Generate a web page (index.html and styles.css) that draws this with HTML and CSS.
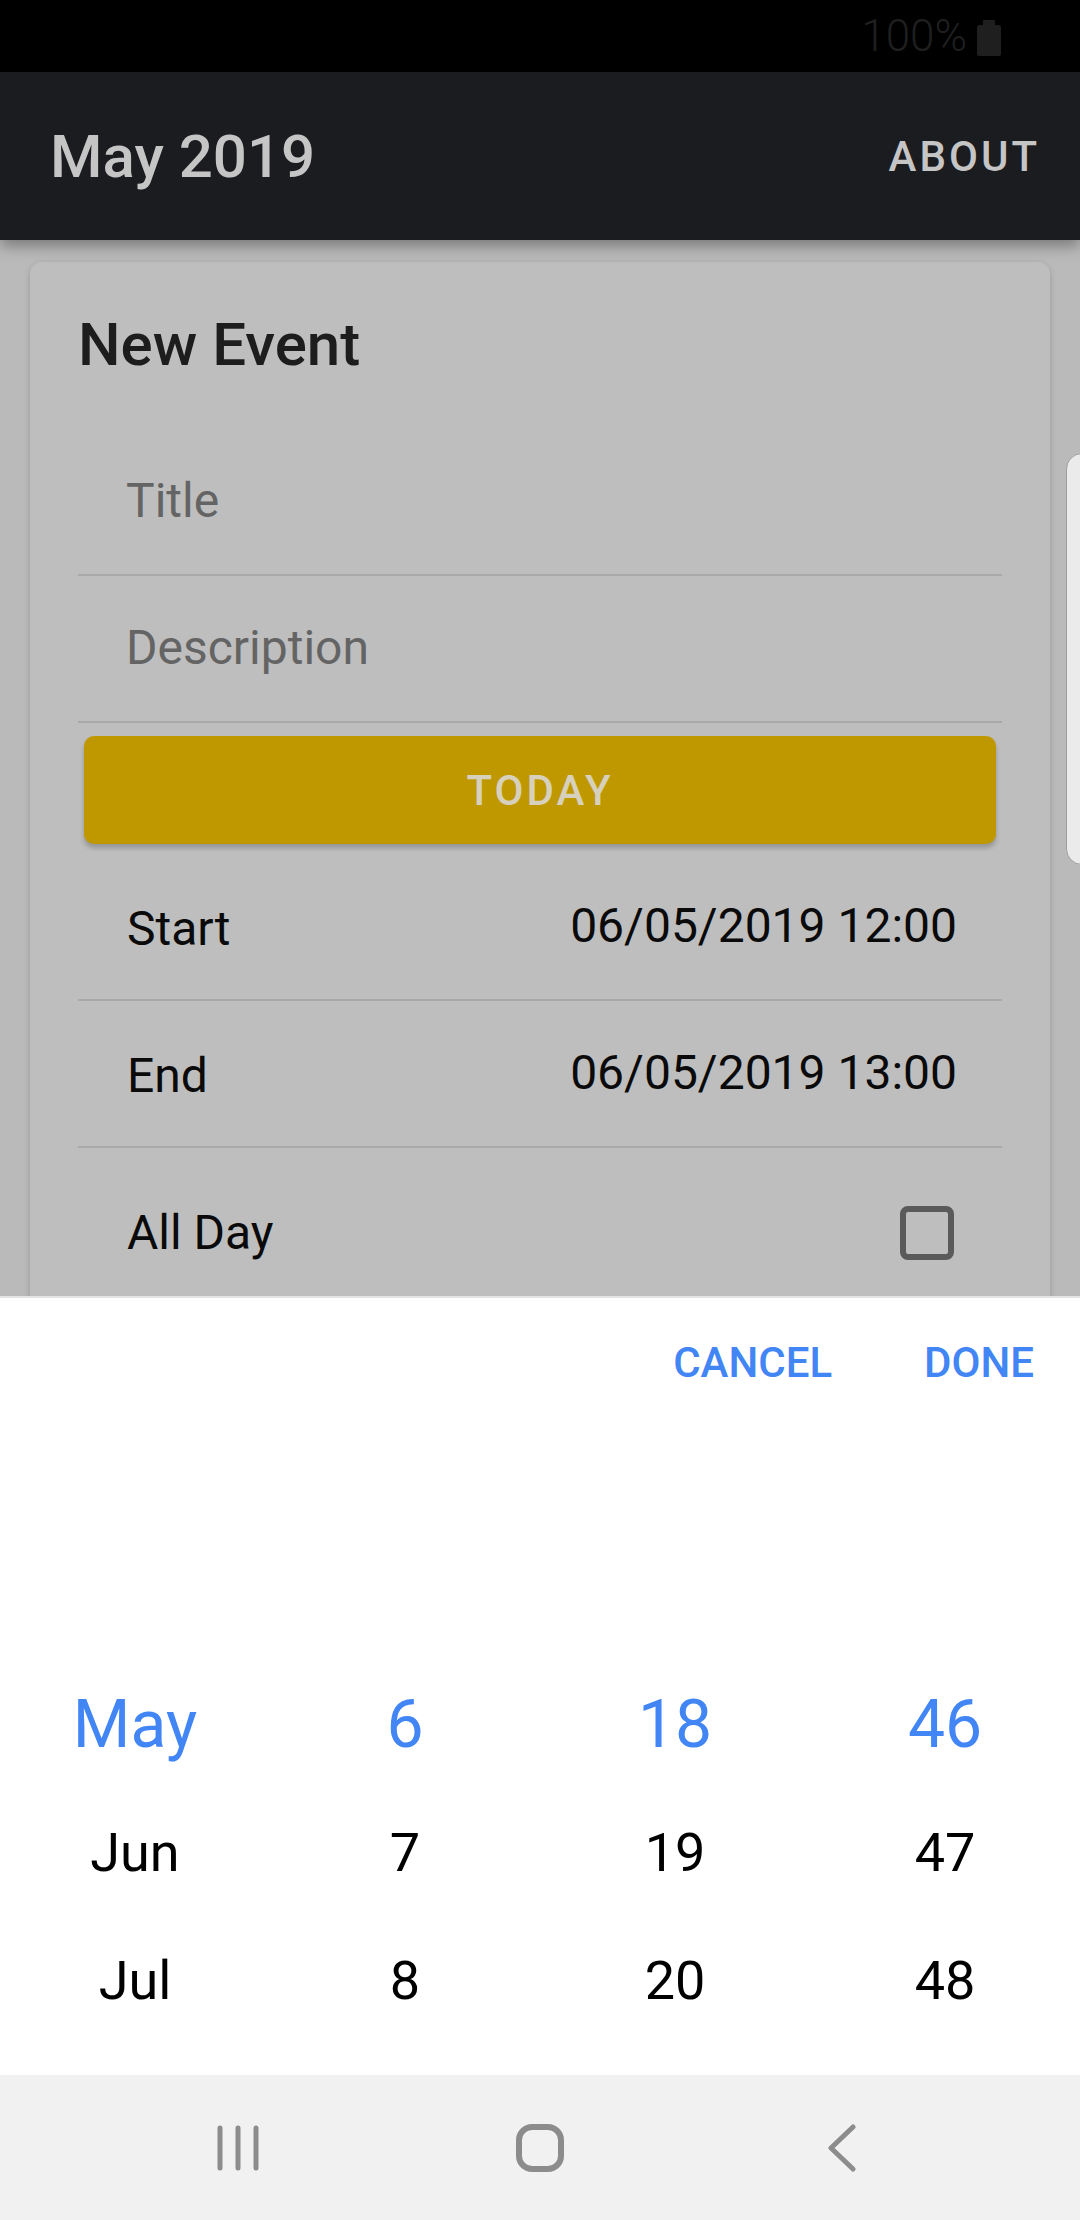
FILE: index.html
```html
<!DOCTYPE html>
<html lang="en">
<head>
<meta charset="utf-8">
<title>May 2019</title>
<link rel="stylesheet" href="styles.css">
</head>
<body>
<div class="screen">
  <div class="status">
    <span class="battery-text">100%</span>
    <svg class="battery" width="24" height="36" viewBox="0 0 24 36"><rect x="6" y="0" width="12" height="6" rx="1" fill="#1f1f1f"/><rect x="0" y="5" width="24" height="31" rx="2.5" fill="#1f1f1f"/></svg>
  </div>
  <header class="appbar">
    <div class="appbar-title">May 2019</div>
    <div class="appbar-action">ABOUT</div>
  </header>
  <main class="content">
    <section class="card">
      <h1 class="card-title">New Event</h1>
      <div class="field">Title</div>
      <div class="field">Description</div>
      <div class="today-btn">TODAY</div>
      <div class="row first">
        <span>Start</span>
        <span class="date">06/05/2019 12:00</span>
      </div>
      <div class="row">
        <span>End</span>
        <span class="date">06/05/2019 13:00</span>
      </div>
      <div class="row last">
        <span>All Day</span>
        <span class="checkbox"></span>
      </div>
    </section>
    <div class="edge-handle"></div>
  </main>
  <section class="sheet">
    <div class="sheet-actions">
      <span>CANCEL</span>
      <span>DONE</span>
    </div>
    <div class="picker">
      <div class="cell selected">May</div>
      <div class="cell selected">6</div>
      <div class="cell selected">18</div>
      <div class="cell selected">46</div>
      <div class="cell">Jun</div>
      <div class="cell">7</div>
      <div class="cell">19</div>
      <div class="cell">47</div>
      <div class="cell">Jul</div>
      <div class="cell">8</div>
      <div class="cell">20</div>
      <div class="cell">48</div>
    </div>
  </section>
  <nav class="navbar">
    <svg width="44" height="48" viewBox="0 0 44 48"><g stroke="#8c8c8c" stroke-width="5" stroke-linecap="round"><line x1="4" y1="4" x2="4" y2="44"/><line x1="22" y1="4" x2="22" y2="44"/><line x1="40" y1="4" x2="40" y2="44"/></g></svg>
    <svg width="50" height="50" viewBox="0 0 50 50"><rect x="4" y="4" width="42" height="42" rx="13" fill="none" stroke="#8c8c8c" stroke-width="6"/></svg>
    <svg width="30" height="48" viewBox="0 0 30 48"><polyline points="26,3 4,24 26,45" fill="none" stroke="#8c8c8c" stroke-width="5" stroke-linecap="round" stroke-linejoin="round"/></svg>
  </nav>
</div>
</body>
</html>
```

FILE: styles.css
```css
html, body {
  margin: 0;
  padding: 0;
  background: #000;
}

.screen {
  width: 1080px;
  height: 2220px;
  display: flex;
  flex-direction: column;
  overflow: hidden;
  font-family: Roboto, "Noto Sans", sans-serif;
}

.status {
  height: 72px;
  flex: none;
  background: #000;
  display: flex;
  align-items: center;
  justify-content: flex-end;
  padding-right: 79px;
  gap: 10px;
}

.battery-text {
  font-size: 44px;
  font-weight: 300;
  color: #1f1f1f;
  line-height: 72px;
}

.battery {
  margin-top: 4px;
}

.appbar {
  height: 168px;
  flex: none;
  background: #1b1c20;
  display: flex;
  align-items: center;
  justify-content: space-between;
  padding: 0 40px 0 50px;
  box-shadow: 0 6px 14px rgba(0, 0, 0, 0.35);
  position: relative;
  z-index: 2;
}

.appbar-title {
  font-size: 60px;
  font-weight: 500;
  color: #c5c5c5;
}

.appbar-action {
  font-size: 42px;
  font-weight: 500;
  color: #c5c5c5;
  letter-spacing: 3px;
}

.content {
  flex: 1;
  background: #bababa;
  overflow: hidden;
  position: relative;
  padding-top: 22px;
}

.card {
  margin: 0 30px;
  padding: 48px 48px 0;
  background: #bebebe;
  border-radius: 12px;
  box-shadow: 0 2px 6px rgba(0, 0, 0, 0.18);
}

.card-title {
  margin: 0;
  font-size: 60px;
  line-height: 70px;
  font-weight: 500;
  color: #1d1d1d;
}

.field {
  box-sizing: border-box;
  height: 147px;
  padding: 44px 0 0 48px;
  border-bottom: 2px solid #a9a9a9;
  font-size: 48px;
  line-height: 56px;
  color: #646464;
}

.card-title + .field {
  margin-top: 49px;
}

.today-btn {
  margin: 13px 6px 0;
  height: 108px;
  border-radius: 10px;
  background: #bf9800;
  color: #d6d0bc;
  font-size: 42px;
  font-weight: 500;
  letter-spacing: 3px;
  display: flex;
  align-items: center;
  justify-content: center;
  box-shadow: 0 4px 5px rgba(0, 0, 0, 0.22);
}

.row {
  box-sizing: border-box;
  height: 147px;
  padding: 4px 48px 0 49px;
  border-bottom: 2px solid #a9a9a9;
  display: flex;
  align-items: center;
  justify-content: space-between;
  font-size: 48px;
  line-height: 56px;
  color: #0a0a0a;
}

.row.first {
  margin-top: 10px;
}

.row .date {
  margin: 0 -3px 6px 0;
}

.row.last {
  height: 162px;
  padding-top: 8px;
  border-bottom: none;
}

.checkbox {
  box-sizing: border-box;
  width: 54px;
  height: 54px;
  border: 6px solid #5a5a5a;
  border-radius: 8px;
}

.edge-handle {
  position: absolute;
  top: 213px;
  left: 1066px;
  width: 40px;
  height: 412px;
  box-sizing: border-box;
  background: #ebebeb;
  border: 1px solid #9e9e9e;
  border-radius: 16px;
}

.sheet {
  flex: none;
  box-sizing: border-box;
  height: 779px;
  background: #fff;
  border-top: 2px solid #e4e4e4;
  display: flex;
  flex-direction: column;
  position: relative;
  z-index: 3;
}

.sheet-actions {
  display: flex;
  justify-content: flex-end;
  gap: 92px;
  padding: 40px 46px 0 0;
  font-size: 42px;
  line-height: 49px;
  font-weight: 500;
  color: #4285f4;
}

.picker {
  margin-top: auto;
  padding-bottom: 31px;
  display: grid;
  grid-template-columns: repeat(4, 270px);
  grid-auto-rows: 128px;
}

.cell {
  display: flex;
  align-items: center;
  justify-content: center;
  font-size: 54px;
  color: #000;
}

.cell.selected {
  font-size: 66px;
  color: #4285f4;
}

.navbar {
  flex: none;
  height: 145px;
  background: #f1f1f1;
  display: grid;
  grid-template-columns: repeat(3, 302px);
  justify-content: center;
  justify-items: center;
  align-items: center;
}

.navbar svg {
  display: block;
}
```
